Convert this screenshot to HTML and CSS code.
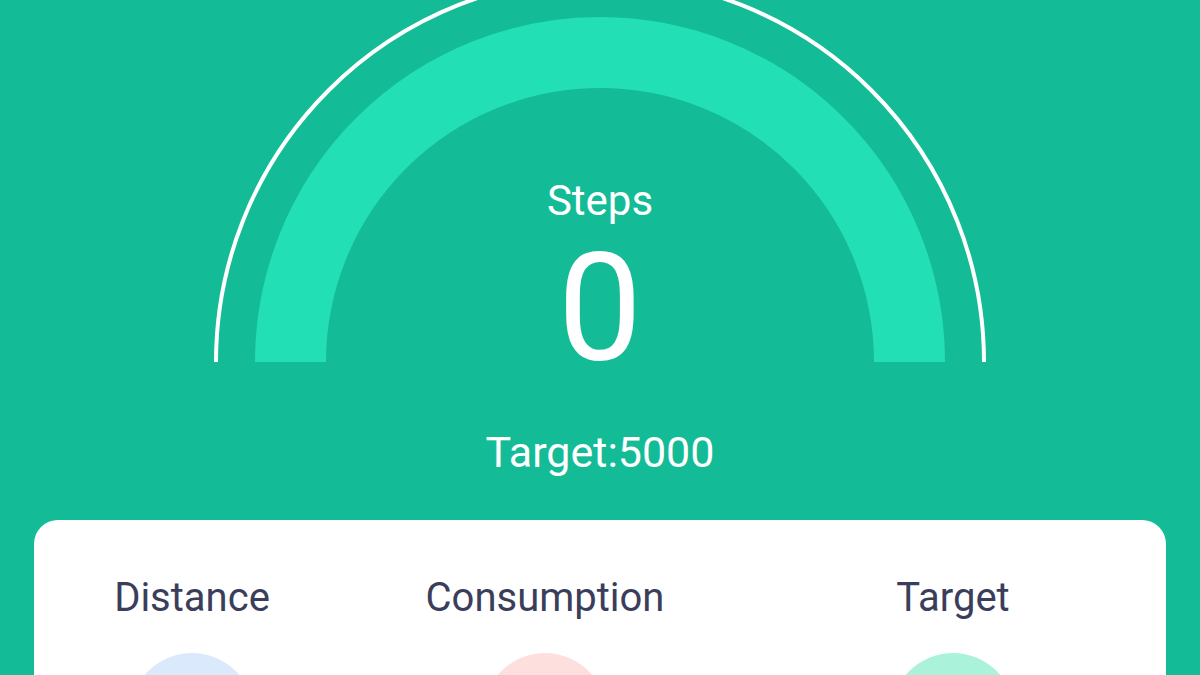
FILE: index.html
```html
<!DOCTYPE html>
<html lang="en">
<head>
    <meta charset="UTF-8">
    <meta name="viewport" content="width=device-width, initial-scale=1.0">
    <title>Steps</title>
    <link rel="stylesheet" href="styles.css">
</head>
<body>
    <div class="gauge">
        <svg class="gauge-arc" width="780" height="386" viewBox="0 0 780 386">
            <path d="M 80.5 386 A 309.5 309.5 0 0 1 699.5 386" fill="none" stroke="#22dfb6" stroke-width="71"/>
            <path d="M 6 386 A 384 384 0 0 1 774 386" fill="none" stroke="#ffffff" stroke-width="4"/>
        </svg>
        <div class="readout">
            <div class="readout-label">Steps</div>
            <div class="readout-value">0</div>
        </div>
    </div>
    <div class="target-line">Target:5000</div>

    <div class="card">
        <div class="stat">
            <div class="stat-label">Distance</div>
            <div class="stat-dot dot-blue"></div>
        </div>
        <div class="stat">
            <div class="stat-label">Consumption</div>
            <div class="stat-dot dot-pink"></div>
        </div>
        <div class="stat">
            <div class="stat-label">Target</div>
            <div class="stat-dot dot-mint"></div>
        </div>
    </div>
</body>
</html>
```

FILE: styles.css
```css
* {
    margin: 0;
    padding: 0;
    box-sizing: border-box;
}

body {
    background-color: #14bb97;
    font-family: Roboto, "Noto Sans", Arial, sans-serif;
    overflow: hidden;
    height: 675px;
}

.gauge {
    position: relative;
    width: 780px;
    height: 386px;
    margin: -24px auto 0;
}

.gauge-arc {
    display: block;
}

.readout {
    position: absolute;
    left: 0;
    right: 0;
    top: 204px;
    text-align: center;
    color: #fff;
}

.readout-label {
    font-size: 42px;
    line-height: 1;
}

.readout-value {
    font-size: 150px;
    line-height: 0.8;
    margin-top: 27px;
}

.target-line {
    margin-top: 69px;
    text-align: center;
    color: #fff;
    font-size: 43px;
    line-height: 1;
}

.card {
    margin: 46px 34px 0;
    background-color: #fff;
    border-radius: 24px 24px 0 0;
    padding-top: 58px;
    height: 200px;
    display: grid;
    grid-template-columns: 316px 390px 1fr;
}

.stat {
    display: flex;
    flex-direction: column;
    align-items: center;
}

.stat-label {
    font-size: 40px;
    line-height: 1;
    color: #3b3e5b;
}

.stat-dot {
    width: 124px;
    height: 124px;
    border-radius: 50%;
    margin-top: 35px;
}

.dot-blue {
    background-color: #dbe9fd;
}

.dot-pink {
    background-color: #fde0dd;
}

.dot-mint {
    background-color: #aaf2da;
}
```
